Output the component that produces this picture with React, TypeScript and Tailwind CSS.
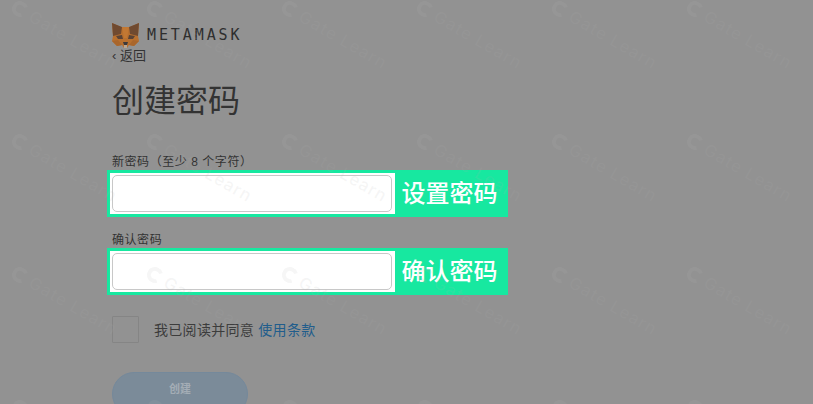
import React from 'react';

const FoxLogo = () => (
  <svg width="27" height="25" viewBox="0 0 27 25" className="block">
    <polygon points="0,0 9,4 18,4 27,0 26,13 27,18 22,23 17,22 15,25 12,25 10,22 5,23 0,18 1,13" fill="#b8702f" />
    <polygon points="0,0 10,4 9,11 1,13" fill="#704a30" />
    <polygon points="27,0 17,4 18,11 26,13" fill="#704a30" />
    <polygon points="10,4 17,4 15,15 12,15" fill="#c27833" />
    <polygon points="4,13 10,12 11,16 6,16" fill="#5a4336" />
    <polygon points="23,13 17,12 16,16 21,16" fill="#5a4336" />
    <polygon points="0,18 6,17 10,22 5,23" fill="#a9662c" />
    <polygon points="27,18 21,17 17,22 22,23" fill="#a9662c" />
    <polygon points="11,19 16,19 15,22 12,22" fill="#3d3a3c" />
    <polygon points="12,22 15,22 15,25 12,25" fill="#b9a692" />
  </svg>
);

const Watermark = () => (
  <div className="w-[135px] h-[133px]">
    <div className="flex items-center gap-[4px] w-max rotate-[30deg] origin-left -translate-y-[9px] text-[17px] font-medium leading-[18px] text-[rgba(177,177,177,0.12)] whitespace-nowrap font-['Inter',sans-serif]">
      <span className="block w-[16px] h-[16px] rounded-full border-[4px] border-[rgba(177,177,177,0.12)] border-r-transparent" />
      <span className="tracking-[1px]">Gate Learn</span>
    </div>
  </div>
);

const PasswordField = ({ label, note }: { label: string; note: string }) => (
  <div className="flex flex-col">
    <div className="text-[12px] leading-[16px] text-[#333] tracking-[0.55px]">{label}</div>
    <div className="-ml-[5px] w-[401px] h-[47px] bg-[#17e8a0] flex p-[3px]">
      <div className="w-[285px] h-[41px] bg-white p-[2px] pr-[3px]">
        <div className="h-[37px] w-[280px] rounded-[5px] border border-[#c8c8c8] bg-white" />
      </div>
      <div className="flex-1 flex items-center justify-center pr-[1px] text-white text-[24px] font-medium leading-none">
        {note}
      </div>
    </div>
  </div>
);

export default function App() {
  const marks = Array.from({ length: 24 });

  return (
    <div className="relative w-[813px] h-[404px] overflow-hidden bg-[#929292] font-['Liberation_Sans','Noto_Sans_CJK_SC',sans-serif]">
      <div className="flex flex-col pl-[112px] pt-[23px]">
        <div className="flex items-center gap-[8px]">
          <FoxLogo />
          <span className="text-[15px] font-normal leading-[25px] tracking-[2.9px] text-[#2e2e2e] font-['DejaVu_Sans_Mono','Liberation_Mono',monospace]">
            METAMASK
          </span>
        </div>
        <div className="text-[13px] leading-[16px] text-[#333]">‹ 返回</div>
        <h1 className="mt-[15px] text-[32px] leading-[44px] font-normal text-[#333]">创建密码</h1>
        <div className="mt-[31px]">
          <PasswordField label="新密码（至少 8 个字符）" note="设置密码" />
        </div>
        <div className="mt-[15px]">
          <PasswordField label="确认密码" note="确认密码" />
        </div>
        <div className="mt-[21px] flex items-center">
          <div className="w-[27px] h-[27px] border border-[#858585] rounded-[1px]" />
          <div className="ml-[15px] pt-[1px] text-[14px] tracking-[0.3px] text-[#3c3c3c]">
            我已阅读并同意 <span className="text-[#215d8c]">使用条款</span>
          </div>
        </div>
        <button className="mt-[29px] w-[136px] h-[44px] rounded-[22px] bg-[#7b8b99] border border-[#75899b] text-[11px] font-bold text-[#a4adb5] flex items-center justify-center pb-[10px]">
          创建
        </button>
      </div>

      {/* watermark tiles over the page */}
      <div className="absolute left-[13px] top-[5px] grid grid-cols-[repeat(6,135px)] auto-rows-[133px] pointer-events-none">
        {marks.map((_, i) => (
          <Watermark key={i} />
        ))}
      </div>
    </div>
  );
}
